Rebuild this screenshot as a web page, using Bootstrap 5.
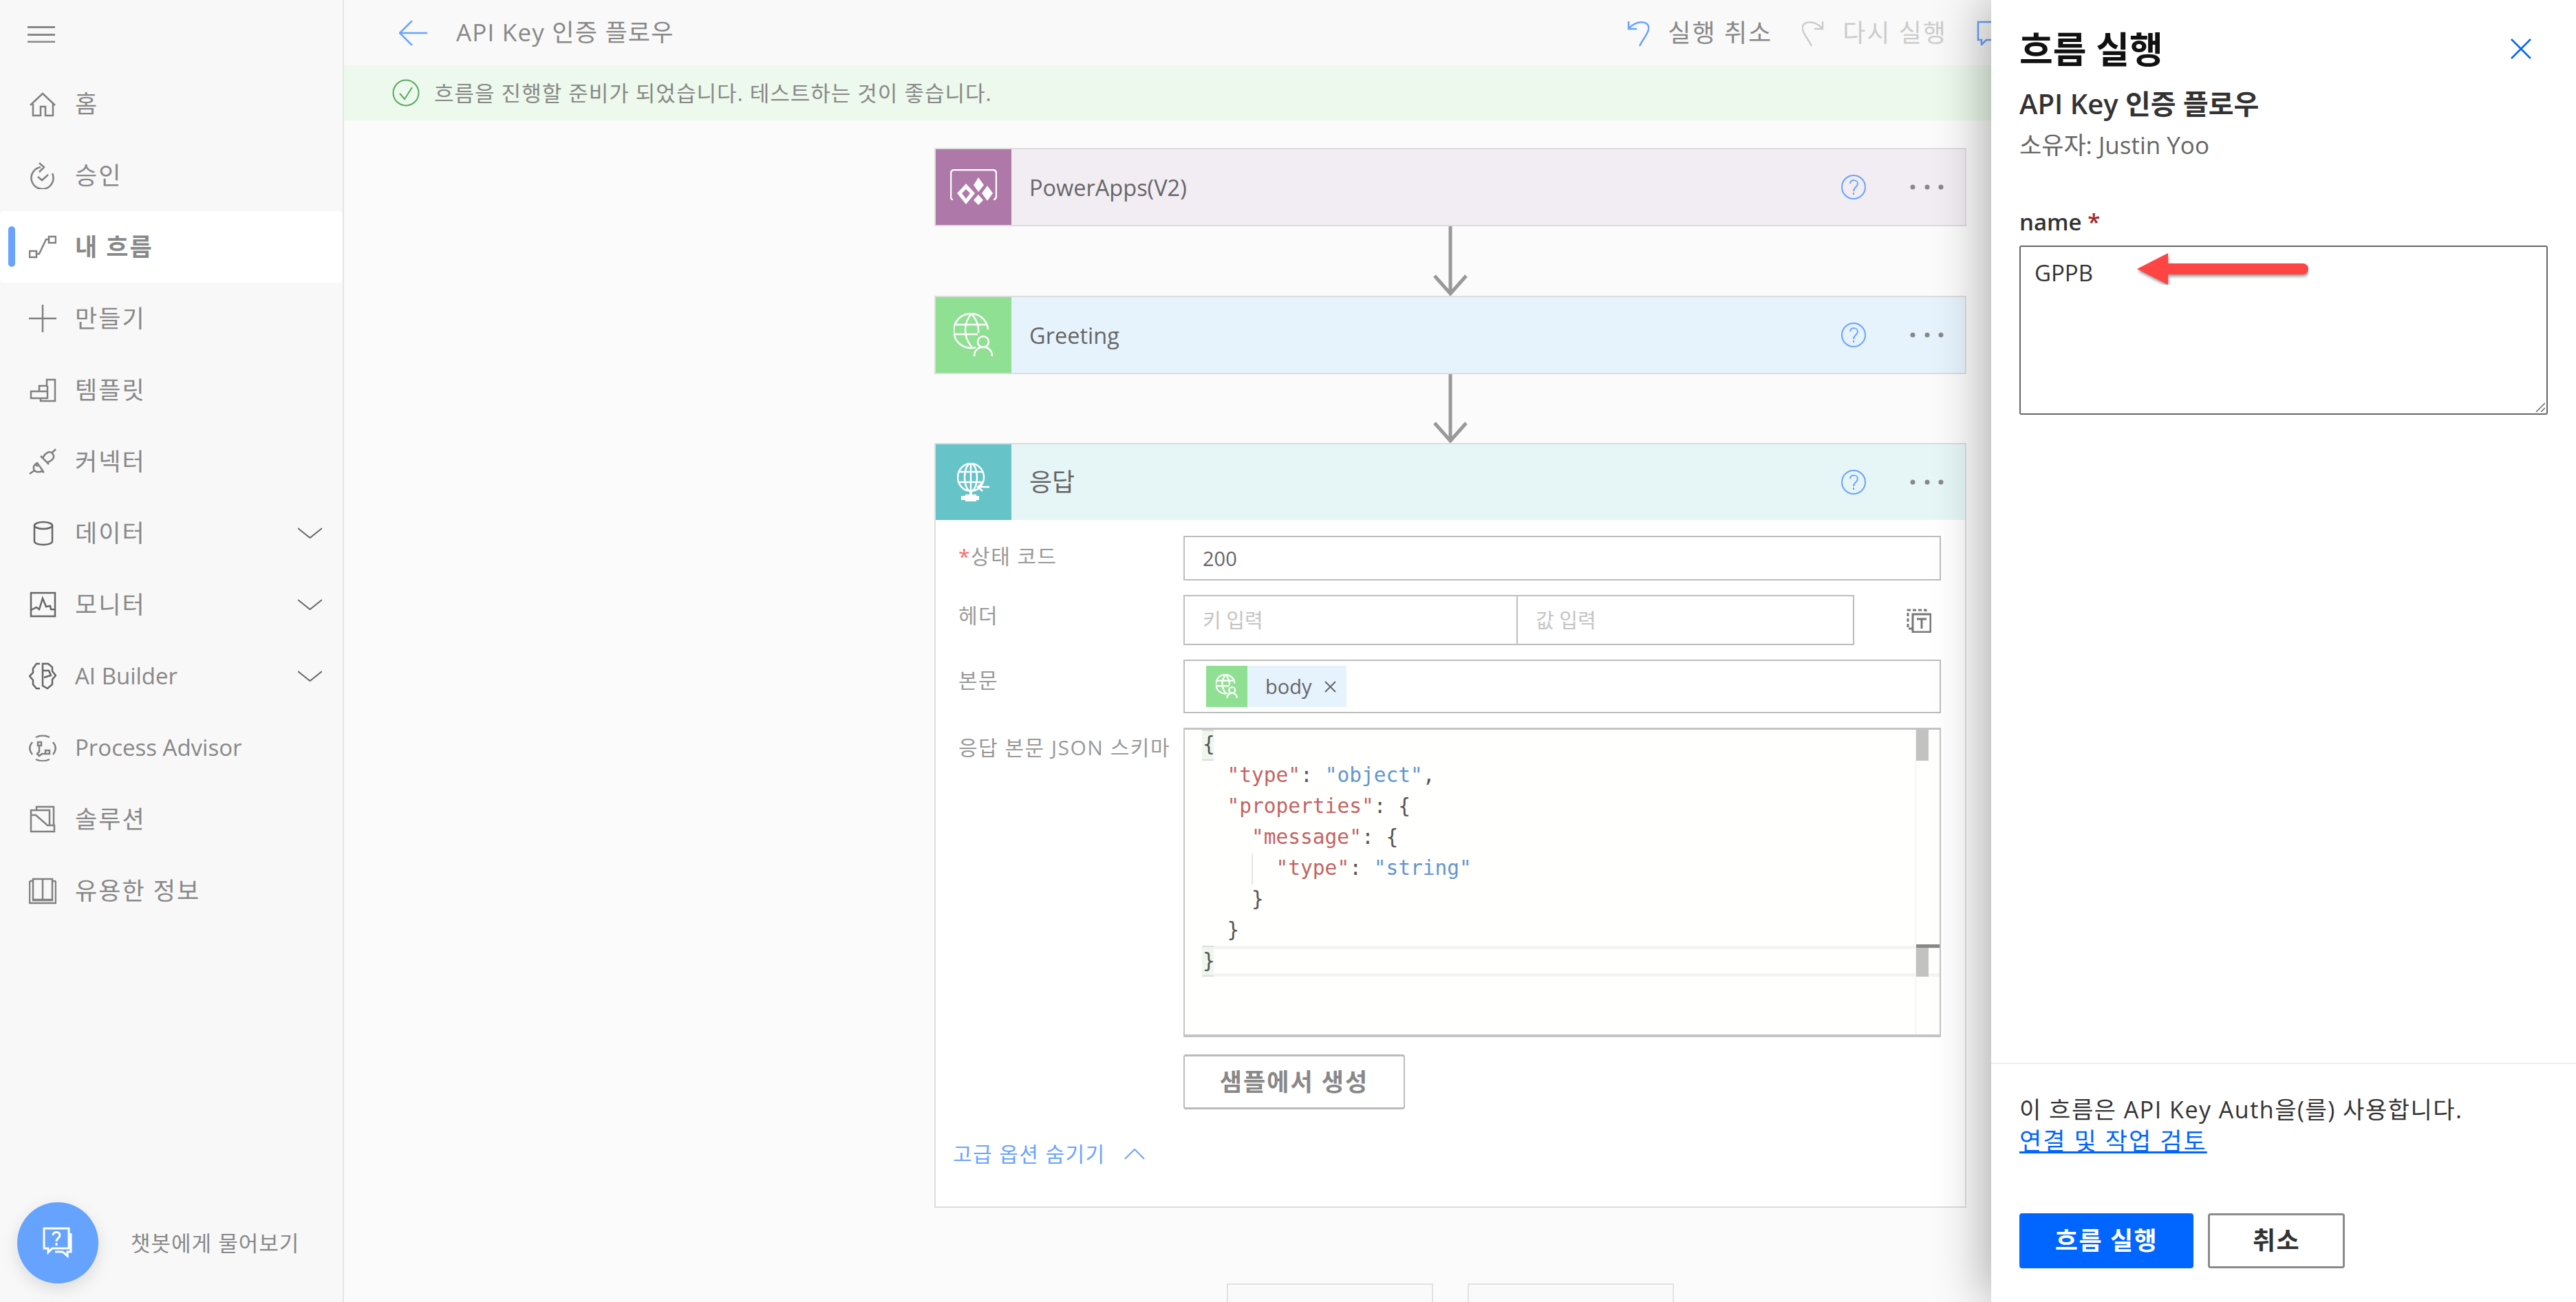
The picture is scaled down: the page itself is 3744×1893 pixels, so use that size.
<!DOCTYPE html>
<html lang="ko">
<head>
  <meta charset="UTF-8" />
  <title>API Key 인증 플로우</title>
  <link href="https://cdn.jsdelivr.net/npm/bootstrap@5.3.0/dist/css/bootstrap.min.css" rel="stylesheet" />
  <style>
    html, body { height: 100%; }
    body {
      font-family: "Open Sans", "Noto Sans CJK KR", sans-serif;
      background: #fbfbfb;
      overflow: hidden;
      color: #666;
    }
    svg { display: block; flex: none; fill: none; stroke: currentColor; }
    .ink-blue { color: #69a3ff; }
    .ink-dark { color: #666 !important; }
    .ink-green { color: #5aa860; }
    /* side menu */
    .side-menu {
      width: 500px;
      height: 1893px;
      background: #f8f8f8;
      border-right: 2px solid #e4e4e4;
      flex: none;
      position: relative;
    }
    .menu-burger { height: 99px; padding: 38px 0 0 40px; color: #888; }
    .menu-row {
      height: 104px;
      padding-left: 42px;
      padding-right: 30px;
      gap: 27px;
      font-size: 33px;
      color: #888;
      position: relative;
    }
    .menu-row .ko { font-size: 35px; letter-spacing: 2px; }
    .menu-row svg { color: #808080; }
    .menu-row.is-active { background: #fff; border-radius: 6px; font-weight: 700; }
    .menu-pill { position: absolute; left: 12px; top: 22px; width: 10px; height: 59px; border-radius: 5px; background: #69a3ff; }
    .menu-chev { margin-left: auto; color: #666 !important; }
    .chat-row { position: absolute; left: 25px; bottom: 27px; gap: 47px; font-size: 31px; letter-spacing: 1px; color: #888; }
    .chat-ball { width: 118px; height: 118px; border-radius: 50%; background: #65a3ff; color: #fff; box-shadow: 0 8px 24px rgba(0,0,0,.12); }
    /* top of the flow page */
    .flow-page { flex: 1 1 auto; min-width: 0; height: 1893px; overflow: hidden; }
    .flow-top { height: 95px; background: #f9f9f9; padding-left: 80px; padding-right: 831px; font-size: 35px; letter-spacing: 1.2px; color: #888; }
    .flow-title { margin-left: 42px; }
    .top-action { gap: 27px; margin-left: 43px; font-size: 36px; letter-spacing: 2px; }
    .top-action.is-off { color: #ccc; }
    .flow-note { height: 80px; background: #ecf9ec; padding-left: 70px; gap: 21px; font-size: 31px; letter-spacing: 1px; color: #888; }
    /* canvas */
    .flow-canvas { padding-top: 40px; padding-right: 28px; }
    .flow-card { width: 1500px; border: 2px solid #ddd; background: #fff; }
    .flow-head { height: 110px; padding-right: 31px; font-size: 32.5px; color: #666; }
    .flow-icon { width: 110px; height: 110px; color: #fff; }
    .flow-name { margin-left: 26px; margin-right: auto; padding-top: 2px; }
    .flow-name.ko { font-size: 36px; padding-top: 0; }
    .head-help { color: #69a3ff; margin-right: 64px; }
    .head-dots { width: 49px; color: #888; fill: currentColor; stroke: none; }
    .flow-arrow { color: #999; }
    .head-purple { background: #f2ecf3; }
    .head-blue { background: #e6f3fd; }
    .head-teal { background: #e6f6f7; }
    .icon-purple { background: #ae79a9; }
    .icon-green { background: #8fe093; }
    .icon-teal { background: #66c3c8; }
    /* response form */
    .flow-form { padding: 23px 35px 0 33px; height: 998px; }
    .form-line { margin-bottom: 21px; }
    .form-line-code { margin-bottom: 25px; }
    .form-name { width: 327px; font-size: 30px; letter-spacing: 1.5px; color: #999; flex: none; }
    .form-name b { color: #f66; font-weight: 400; }
    .name-status { padding-bottom: 6px; }
    .name-header { padding-bottom: 14px; }
    .name-body { padding-bottom: 20px; }
    .name-code { padding-top: 6px; }
    .form-box { border: 2px solid #bdbdbd; background: #fff; font-size: 29px; color: #666; padding: 0 26px; }
    .form-hint { color: #c4c4c4; }
    .box-status { height: 65px; }
    .box-key { width: 486px; height: 73px; }
    .box-val { width: 489px; height: 73px; border-left: 0; }
    .box-body { height: 78px; }
    .map-icon { color: #777; margin-right: 14px; }
    .token-chip { height: 60px; background: #e6f3fd; padding-right: 15px; font-size: 29px; color: #666; margin-left: 31px; }
    .token-icon { width: 60px; height: 60px; background: #8fe093; color: #fff; margin-right: 26px; }
    .token-x { margin-left: 19px; }
    .code-box {
      width: 1101px; height: 450px; border: 2px solid #c4c4c4; border-top-width: 3px; border-bottom-width: 4px;
      background: #fffffd; position: relative; overflow: hidden;
      font-family: "DejaVu Sans Mono", monospace; font-size: 29.5px; line-height: 45px; color: #555;
    }
    .code-lines { position: absolute; left: 26px; top: -1px; }
    .code-line { height: 45px; white-space: pre; }
    .c-key { color: #c46464; }
    .c-str { color: #6296cf; }
    .code-match { position: absolute; left: 25px; width: 17px; height: 45px; background: #eef6ee; border: 2px solid #ddd; border-width: 2px 0; }
    .match-top { top: 0; }
    .match-end { top: 314px; }
    .code-current { position: absolute; left: 42px; right: 0; top: 314px; height: 45px; border-top: 5px solid #f4f4f4; border-bottom: 5px solid #f4f4f4; }
    .code-guide { position: absolute; left: 97px; top: 180px; height: 45px; border-left: 2px solid #e6e6e6; }
    .code-track { position: absolute; right: 0; top: 0; bottom: 0; width: 35px; border-left: 1px solid #eee; }
    .code-thumb { position: absolute; left: 0; width: 18px; height: 45px; background: #c2c2c2; }
    .thumb-top { top: 0; }
    .thumb-end { top: 314px; }
    .code-mark { position: absolute; left: 0; right: 0; top: 312px; height: 5px; background: #888; }
    .sample-btn {
      width: 322px; height: 80px; margin-left: 327px; border: 2px solid #bbb; border-top-width: 3px; border-bottom-width: 3px;
      border-radius: 4px; background: #fff; font-size: 35px; letter-spacing: 2px; font-weight: 700; color: #888; padding: 0;
    }
    .more-link { margin-top: 42px; margin-left: -8px; gap: 28px; font-size: 30px; letter-spacing: 1.4px; color: #69a3ff; }
    .end-row { gap: 50px; margin-top: 110px; }
    .end-btn { width: 300px; height: 100px; border: 2px solid #e2e2e2; background: #fafafa; }
    /* run panel */
    .run-panel {
      position: absolute; top: 0; right: 0; width: 850px; height: 1893px;
      background: #fff; box-shadow: -8px 0 70px rgba(0,0,0,.32); padding-left: 41px; color: #333;
    }
    .run-head { height: 116px; padding-top: 36px; padding-right: 65px; }
    .run-title { font-size: 53px; font-weight: 700; color: #111; line-height: 72px; }
    .run-close { color: #06f; margin-top: 20px; }
    .run-sub { font-size: 40px; font-weight: 600; line-height: 54px; margin-top: 8px; }
    .run-owner { font-size: 35px; color: #666; line-height: 50px; margin-top: 8px; }
    .run-label { font-size: 33px; font-weight: 600; margin-top: 64px; line-height: 46px; }
    .run-label b { color: #a4262c; font-weight: 600; }
    .run-area {
      width: 768px; height: 246px; margin-top: 11px; border: 2px solid #666; border-radius: 3px;
      padding: 16px 20px; font-size: 33px; position: relative; line-height: 44px;
    }
    .run-grip { position: absolute; right: 2px; bottom: 2px; color: #666; }
    .run-arrow { position: absolute; left: 169px; top: 9px; }
    .arrow-fill { fill: #f44; stroke: none; filter: drop-shadow(1px 3px 2px rgba(0,0,0,.4)); }
    .run-foot { position: absolute; left: 0; right: 0; bottom: 0; height: 348px; border-top: 2px solid #eee; padding: 43px 0 0 41px; font-size: 34px; letter-spacing: 1.5px; line-height: 46px; }
    .run-link { color: #06f; font-size: 35px; letter-spacing: 2px; text-decoration-thickness: 3px; display: block; }
    .run-btns { gap: 21px; margin-top: 82px; }
    .run-btn { height: 80px; border-radius: 4px; font-size: 36px; letter-spacing: 1.5px; font-weight: 700; padding: 0; }
    .run-go { width: 253px; background: #06f; color: #fff; border: 0; }
    .run-no { width: 199px; background: #fff; color: #333; border: 3px solid #8a8a8a; }
  </style>
</head>
<body>
<div class="d-flex">
  <!-- left menu -->
  <nav class="side-menu">
    <div class="menu-burger">
      <svg width="40" height="24" stroke-width="3"><path d="M0 1.5h40M0 12.5h40M0 23h40"/></svg>
    </div>
    <div class="menu-row d-flex align-items-center">
      <svg width="40" height="40" viewBox="0 0 40 40" stroke-width="2.5"><path d="M2 22 20 5l18 17M6 20v17h11V24h7v13h11V20"/></svg>
      <span class="ko">홈</span>
    </div>
    <div class="menu-row d-flex align-items-center">
      <svg width="40" height="40" viewBox="0 0 40 40" stroke-width="2.5"><path d="M17 8a16 16 0 1 0 17 9M15 2l7 6-7 7M13 22l6 5 9-8"/></svg>
      <span class="ko">승인</span>
    </div>
    <div class="menu-row is-active d-flex align-items-center">
      <i class="menu-pill"></i>
      <svg width="40" height="40" viewBox="0 0 40 40" stroke-width="2.5"><path d="M1 26h10v9H1zM29 5h10v9H29zM11 30h4L25 9h4"/></svg>
      <span class="ko">내 흐름</span>
    </div>
    <div class="menu-row d-flex align-items-center">
      <svg width="40" height="40" viewBox="0 0 40 40" stroke-width="2.5"><path d="M0 20h40M20 0v40"/></svg>
      <span class="ko">만들기</span>
    </div>
    <div class="menu-row d-flex align-items-center">
      <svg width="40" height="40" viewBox="0 0 40 40" stroke-width="2.5"><path d="M3 32V22h12V14h11V5h12v31H17v-4zM15 22h12v-8M17 32h10v-10"/></svg>
      <span class="ko">템플릿</span>
    </div>
    <div class="menu-row d-flex align-items-center">
      <svg width="40" height="40" viewBox="0 0 40 40" stroke-width="2.5"><path d="M1 38l7-5M8 33c-3-5 0-9 4-11l8 11c-4 3-9 3-12 0zM13 27l-4-3M18 33l4 3M20 15c3-7 9-10 13-8l3 4c1 4-3 9-10 10zM34 7l5-5M20 15l-3-3M26 21l3 3"/></svg>
      <span class="ko">커넥터</span>
    </div>
    <div class="menu-row d-flex align-items-center">
      <svg class="ink-dark" width="40" height="40" viewBox="0 0 40 40" stroke-width="2.5"><ellipse cx="21" cy="9" rx="13" ry="5"/><path d="M8 9v23c0 3 6 5 13 5s13-2 13-5V9"/></svg>
      <span class="ko">데이터</span>
      <svg class="menu-chev" width="35" height="16" viewBox="0 0 35 16" stroke-width="2"><path d="M0 1l17.500 14L35 1"/></svg>
    </div>
    <div class="menu-row d-flex align-items-center">
      <svg class="ink-dark" width="40" height="40" viewBox="0 0 40 40" stroke-width="2.5"><path d="M3 3h35v34H3zM3 28l8-4 4 3 5-16 5 12 6-1 1 5h6"/></svg>
      <span class="ko">모니터</span>
      <svg class="menu-chev" width="35" height="16" viewBox="0 0 35 16" stroke-width="2"><path d="M0 1l17.500 14L35 1"/></svg>
    </div>
    <div class="menu-row d-flex align-items-center">
      <svg class="ink-dark" width="40" height="40" viewBox="0 0 40 40" stroke-width="2.5"><path d="M16 2h-5L6 9v6l-5 5 5 6v6l5 6h5M20 2h8l6 5v6l5 6-5 6v7l-7 6-7-4zM21 12h8l3 7-10 3"/></svg>
      <span>AI Builder</span>
      <svg class="menu-chev" width="35" height="16" viewBox="0 0 35 16" stroke-width="2"><path d="M0 1l17.500 14L35 1"/></svg>
    </div>
    <div class="menu-row d-flex align-items-center">
      <svg width="40" height="40" viewBox="0 0 40 40" stroke-width="2.5"><path d="M5 12c-5 6-5 12 0 18M35 12c5 6 5 12 0 18M10 5c6-3 14-3 20 0M10 37c6 3 14 3 20 0M13 12h5v5h-5zM24 24h6v5h-6zM15 17v9l-3 3 3 3 4-3h5"/></svg>
      <span>Process Advisor</span>
    </div>
    <div class="menu-row d-flex align-items-center">
      <svg width="40" height="40" viewBox="0 0 40 40" stroke-width="2.5"><path d="M3 38V14h7l17 15h10v9zM3 14V7h27v22M11 7V2h25v27"/></svg>
      <span class="ko">솔루션</span>
    </div>
    <div class="menu-row d-flex align-items-center">
      <svg width="40" height="40" viewBox="0 0 40 40" stroke-width="2.5"><path d="M1 6h5v28h14M39 6h-5v28H20M6 3h14v30H6zM20 3h14v30H20zM1 6v32h38V6"/></svg>
      <span class="ko">유용한 정보</span>
    </div>
    <div class="chat-row d-flex align-items-center">
      <div class="chat-ball d-flex align-items-center justify-content-center">
        <svg width="44" height="46" viewBox="0 0 44 46" stroke-width="3"><path d="M2 2h36v29H14l-6 6v-6H2zM41 9v27h-5v6l-7-6H18"/><path d="M15 12c0-6 10-6 10 0 0 4-5 4-5 9M20 23v4"/></svg>
      </div>
      <span>챗봇에게 물어보기</span>
    </div>
  </nav>

  <main class="flow-page">
    <div class="flow-top d-flex align-items-center">
      <svg class="ink-blue" width="41" height="36" viewBox="0 0 41 36" stroke-width="2.5"><path d="M19 0 1 18l18 18M1 18h40"/></svg>
      <span class="flow-title">API Key 인증 플로우</span>
      <div class="ms-auto d-flex">
        <div class="top-action d-flex align-items-center">
          <svg class="ink-blue" width="32" height="38" viewBox="0 0 32 38" stroke-width="2.5"><path d="M2 2v11h12M2 13C12 0 34 0 31 14c-2 8-9 15-13 24"/></svg>
          <span>실행 취소</span>
        </div>
        <div class="top-action is-off d-flex align-items-center">
          <svg width="32" height="38" viewBox="0 0 32 38" stroke-width="2.5"><path d="M30 2v11H18M30 13C20 0-2 0 1 14c2 8 9 15 13 24"/></svg>
          <span>다시 실행</span>
        </div>
        <div class="top-action d-flex align-items-center">
          <svg class="ink-blue" width="40" height="36" viewBox="0 0 40 36" stroke-width="2.5"><path d="M2 2h36v26H14l-7 7v-7H2z"/></svg>
        </div>
      </div>
    </div>
    <div class="flow-note d-flex align-items-center">
      <svg class="ink-green" width="40" height="40" viewBox="0 0 40 40" stroke-width="2"><circle cx="20" cy="20" r="18.500"/><path d="m11 21 7 8 11-17"/></svg>
      <span>흐름을 진행할 준비가 되었습니다. 테스트하는 것이 좋습니다.</span>
    </div>

    <div class="flow-canvas d-flex flex-column align-items-center">
      <section class="flow-card">
        <div class="flow-head head-purple d-flex align-items-center">
          <div class="flow-icon icon-purple d-flex align-items-center justify-content-center">
            <svg width="68" height="52" viewBox="0 0 68 52" stroke-width="2.5"><path d="M4 44C0 44 1 40 1 38V6c0-3 2-5 5-5h56c3 0 5 2 5 5v32c0 3-1 6-4 6"/><path fill="#fff" stroke="none" d="m23 21 13 14-13 16-13-16zm0 8-6 6 6 8 6-8zM41 12l8 11-8 10-7-10zM54 24l8 11-8 11-8-11zM41 37l7 8-7 7-7-7z"/></svg>
          </div>
          <span class="flow-name">PowerApps(V2)</span>
          <svg class="head-help" width="36" height="36" viewBox="0 0 36 36" stroke-width="2"><circle cx="18" cy="18" r="17"/><path d="M13 13c0-7 11-6 11 0 0 5-6 5-6 11M18 26v3"/></svg>
          <svg class="head-dots" height="8" viewBox="0 0 49 8"><circle cx="4" cy="4" r="3.500"/><circle cx="25" cy="4" r="3.500"/><circle cx="45" cy="4" r="3.500"/></svg>
        </div>
      </section>
      <svg class="flow-arrow" width="50" height="101" viewBox="0 0 50 101" stroke-width="5"><path d="M25 0v97M2 72l23 26 23-26"/></svg>
      <section class="flow-card">
        <div class="flow-head head-blue d-flex align-items-center">
          <div class="flow-icon icon-green d-flex align-items-center justify-content-center">
            <svg width="58" height="64" viewBox="0 0 58 64" stroke-width="2.5"><path d="M32 50A25 25 0 1 1 50 24M26 1c-12 14-12 34 0 48M26 1c8 9 11 18 10 28M3 17h44M1 31h34"/><circle cx="43" cy="42" r="8"/><path d="M30 63c0-18 26-18 26 0"/></svg>
          </div>
          <span class="flow-name">Greeting</span>
          <svg class="head-help" width="36" height="36" viewBox="0 0 36 36" stroke-width="2"><circle cx="18" cy="18" r="17"/><path d="M13 13c0-7 11-6 11 0 0 5-6 5-6 11M18 26v3"/></svg>
          <svg class="head-dots" height="8" viewBox="0 0 49 8"><circle cx="4" cy="4" r="3.500"/><circle cx="25" cy="4" r="3.500"/><circle cx="45" cy="4" r="3.500"/></svg>
        </div>
      </section>
      <svg class="flow-arrow" width="50" height="100" viewBox="0 0 50 100" stroke-width="5"><path d="M25 0v96M2 71l23 26 23-26"/></svg>
      <section class="flow-card">
        <div class="flow-head head-teal d-flex align-items-center">
          <div class="flow-icon icon-teal d-flex align-items-center justify-content-center">
            <svg width="48" height="56" viewBox="0 0 48 56" stroke-width="2.5"><ellipse cx="20" cy="21" rx="19" ry="20"/><ellipse cx="20" cy="21" rx="9" ry="20"/><path d="M2 13h36M1 28h36M20 1v40M47 35H30M37 29l-7 6 7 6"/><path fill="#fff" stroke="none" d="M18 41h4v5h6v2h4v6h-4v2H12v-2H6v-6h6v-2h6z"/></svg>
          </div>
          <span class="flow-name ko">응답</span>
          <svg class="head-help" width="36" height="36" viewBox="0 0 36 36" stroke-width="2"><circle cx="18" cy="18" r="17"/><path d="M13 13c0-7 11-6 11 0 0 5-6 5-6 11M18 26v3"/></svg>
          <svg class="head-dots" height="8" viewBox="0 0 49 8"><circle cx="4" cy="4" r="3.500"/><circle cx="25" cy="4" r="3.500"/><circle cx="45" cy="4" r="3.500"/></svg>
        </div>
        <div class="flow-form">
          <div class="form-line d-flex align-items-center">
            <span class="form-name name-status"><b>*</b>상태 코드</span>
            <div class="form-box box-status flex-grow-1 d-flex align-items-center">200</div>
          </div>
          <div class="form-line d-flex align-items-center">
            <span class="form-name name-header">헤더</span>
            <div class="form-box form-hint box-key d-flex align-items-center">키 입력</div>
            <div class="form-box form-hint box-val d-flex align-items-center">값 입력</div>
            <svg class="map-icon ms-auto" width="36" height="36" viewBox="0 0 36 36" stroke-width="3"><path stroke-dasharray="5 3" d="M8 30H2V3h26v5"/><path d="M9 9h26v26H9zM15 16h14M22 16v14"/></svg>
          </div>
          <div class="form-line d-flex align-items-center">
            <span class="form-name name-body">본문</span>
            <div class="form-box box-body flex-grow-1 d-flex align-items-center p-0">
              <div class="token-chip d-flex align-items-center">
                <div class="token-icon d-flex align-items-center justify-content-center">
                  <svg width="32" height="36" viewBox="0 0 58 64" stroke-width="4"><path d="M32 50A25 25 0 1 1 50 24M26 1c-12 14-12 34 0 48M26 1c8 9 11 18 10 28M3 17h44M1 31h34"/><circle cx="43" cy="42" r="8"/><path d="M30 63c0-18 26-18 26 0"/></svg>
                </div>
                <span>body</span>
                <svg class="token-x" width="17" height="17" viewBox="0 0 17 17" stroke-width="2"><path d="m1 1 15 15M16 1 1 16"/></svg>
              </div>
            </div>
          </div>
          <div class="form-line-code d-flex">
            <span class="form-name name-code">응답 본문 JSON 스키마</span>
            <div class="code-box">
              <i class="code-match match-top"></i>
              <i class="code-match match-end"></i>
              <i class="code-current"></i>
              <i class="code-guide"></i>
              <div class="code-lines">
                <div class="code-line">{</div>
                <div class="code-line">  <span class="c-key">"type"</span>: <span class="c-str">"object"</span>,</div>
                <div class="code-line">  <span class="c-key">"properties"</span>: {</div>
                <div class="code-line">    <span class="c-key">"message"</span>: {</div>
                <div class="code-line">      <span class="c-key">"type"</span>: <span class="c-str">"string"</span></div>
                <div class="code-line">    }</div>
                <div class="code-line">  }</div>
                <div class="code-line">}</div>
              </div>
              <div class="code-track">
                <i class="code-thumb thumb-top"></i>
                <i class="code-thumb thumb-end"></i>
                <i class="code-mark"></i>
              </div>
            </div>
          </div>
          <button class="sample-btn d-block" type="button">샘플에서 생성</button>
          <div class="more-link d-flex align-items-center">
            <span>고급 옵션 숨기기</span>
            <svg width="30" height="16" viewBox="0 0 30 16" stroke-width="2"><path d="M1 15 15 1l14 14"/></svg>
          </div>
        </div>
      </section>
      <div class="end-row d-flex">
        <div class="end-btn"></div>
        <div class="end-btn"></div>
      </div>
    </div>
  </main>

  <!-- run panel over the page -->
  <aside class="run-panel">
    <div class="run-head d-flex justify-content-between align-items-start">
      <div class="run-title">흐름 실행</div>
      <svg class="run-close" width="30" height="30" viewBox="0 0 30 30" stroke-width="2.5"><path d="m1 1 28 28M29 1 1 29"/></svg>
    </div>
    <div class="run-sub">API Key 인증 플로우</div>
    <div class="run-owner">소유자: Justin Yoo</div>
    <div class="run-label">name <b>*</b></div>
    <div class="run-area">GPPB
      <svg class="run-arrow" width="249" height="46" viewBox="0 0 249 46"><path class="arrow-fill" d="M0 23 45 0v15h196a8 8 0 0 1 0 16H45v15z"/></svg>
      <svg class="run-grip" width="14" height="14" viewBox="0 0 14 14" stroke-width="1.5"><path d="M1 14 14 1M8 14l6-6"/></svg>
    </div>
    <div class="run-foot">
      <div>이 흐름은 API Key Auth을(를) 사용합니다.</div>
      <a class="run-link" href="#">연결 및 작업 검토</a>
      <div class="run-btns d-flex">
        <button class="run-btn run-go" type="button">흐름 실행</button>
        <button class="run-btn run-no" type="button">취소</button>
      </div>
    </div>
  </aside>
</div>
<script src="https://cdn.jsdelivr.net/npm/bootstrap@5.3.0/dist/js/bootstrap.bundle.min.js"></script>
</body>
</html>
